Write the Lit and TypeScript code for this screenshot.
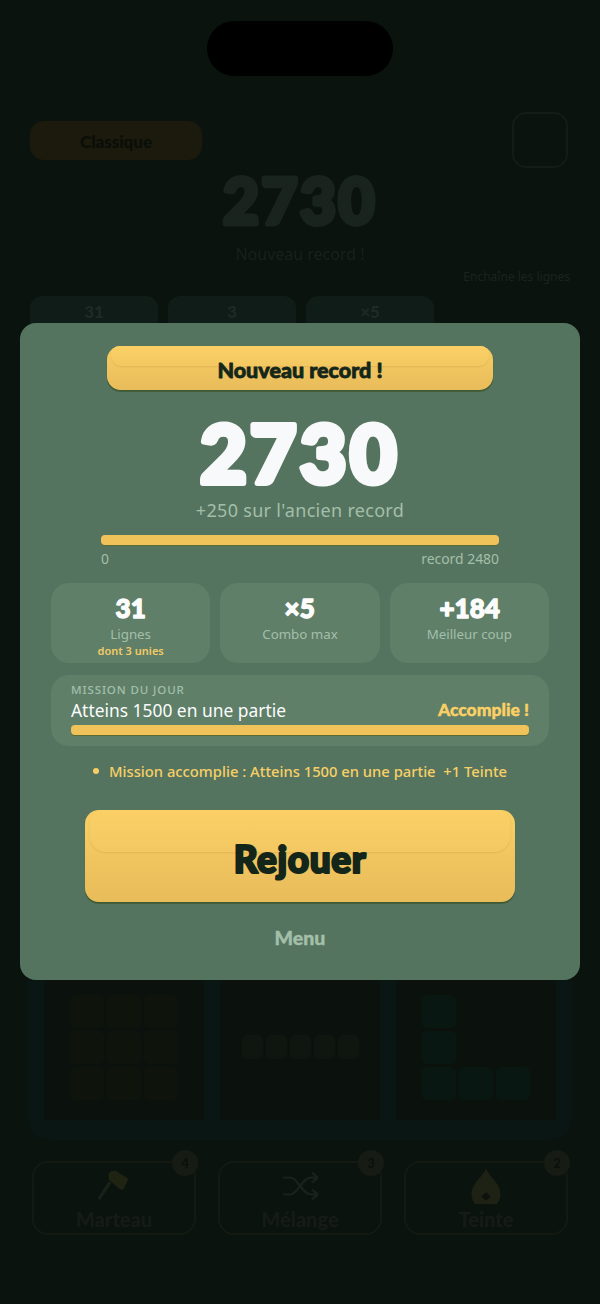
import { LitElement, html, css, svg } from "lit";
import { customElement } from "lit/decorators.js";

const stats = [
  { value: "31", label: "Lignes", note: "dont 3 unies" },
  { value: "×5", label: "Combo max", note: "" },
  { value: "+184", label: "Meilleur coup", note: "" },
];

// cells of the three tray pieces, 1 = filled
const pieces = [
  { cls: "warm", cols: 3, cells: [1, 1, 1, 1, 1, 1, 1, 1, 1] },
  { cls: "dull", cols: 5, cells: [1, 1, 1, 1, 1] },
  { cls: "teal", cols: 3, cells: [1, 0, 0, 1, 0, 0, 1, 1, 1] },
];

const hammer = svg`<path d="M3 27l-1.500-2 9-14 2.500 1.500z" fill="#1c2118"/><path d="M12 3l4-1 11 7-4 9-3 0-9-8c-1-2-1-5 1-7z" fill="#1f2312"/>`;
const shuffle = svg`<path d="M1 8h6c6 0 10 14 17 14h5M1 22h6c6 0 10-14 17-14h5M25 4l5 4-5 4M25 18l5 4-5 4" fill="none" stroke="#1a211a" stroke-width="2"/>`;
const drop = svg`<path d="M15 0c2 7 12 12 12 22a12 12 0 0 1-24 0C3 12 13 7 15 0z" fill="#1e2214"/><path d="M15 20l4 4-4 3-4-3z" fill="#0c130d"/>`;

const powers = [
  { icon: hammer, label: "Marteau", count: "4" },
  { icon: shuffle, label: "Mélange", count: "3" },
  { icon: drop, label: "Teinte", count: "2" },
];

// chunky rounded lettering: svg text so the stroke can have round joins
const chunky = (text: string, cls: string) =>
  html`<svg class="chunky ${cls}"><text x="50%" y="50%" text-anchor="middle" dominant-baseline="central">${text}</text></svg>`;

@customElement("app-root")
export class AppRoot extends LitElement {
  static styles = css`
    :host {
      display: block;
      position: relative;
      width: 600px;
      height: 1304px;
      overflow: hidden;
      background: #0a130e;
      font-family: "Noto Sans", sans-serif;
    }
    .island {
      position: absolute;
      top: 21px;
      left: 207px;
      width: 186px;
      height: 55px;
      border-radius: 28px;
      background: #000;
    }
    .chunky {
      display: block;
      overflow: visible;
    }
    .chunky text {
      fill: currentColor;
      stroke: currentColor;
      stroke-linejoin: round;
      paint-order: stroke fill;
      font-family: Lato, sans-serif;
      font-weight: 900;
    }

    /* game behind the dialog */
    .game {
      display: flex;
      flex-direction: column;
      padding: 112px 28px 0;
    }
    .topbar {
      display: flex;
      justify-content: space-between;
      align-items: center;
      height: 56px;
      padding: 0 4px 0 2px;
    }
    .mode {
      width: 172px;
      height: 39px;
      border-radius: 14px;
      background: #1b1a0c;
      color: #0a0e09;
      font: 900 17px/42px Lato, sans-serif;
      text-align: center;
    }
    .square {
      box-sizing: border-box;
      width: 56px;
      height: 56px;
      border: 2px solid #151c16;
      border-radius: 14px;
    }
    .ghost-score {
      width: 544px;
      height: 64px;
      color: #1a241f;
    }
    .ghost-score text {
      font-size: 62px;
      letter-spacing: 2.5px;
      stroke-width: 5px;
    }
    .ghost-sub {
      margin-top: 12px;
      color: #17211b;
      font-size: 16px;
      line-height: 20px;
      text-align: center;
    }
    .ghost-hint {
      height: 18px;
      margin-top: 4px;
      padding-right: 2px;
      color: #1a241e;
      font-size: 12px;
      line-height: 18px;
      text-align: right;
    }
    .ghost-stats {
      display: flex;
      gap: 10px;
      margin: 10px 0 0 2px;
    }
    .ghost-stats div {
      width: 128px;
      height: 44px;
      border-radius: 12px;
      background: #101c17;
      color: #1e2a24;
      font: 900 17px/32px Lato, sans-serif;
      text-align: center;
    }
    .board {
      box-sizing: border-box;
      height: 800px;
      padding: 0 16px 20px;
      display: flex;
      align-items: flex-end;
      gap: 16px;
      border-radius: 22px;
      background: #0a1613;
    }
    .slot {
      flex: 1;
      height: 146px;
      display: flex;
      align-items: center;
      justify-content: center;
      background: #0b120e;
    }
    .piece {
      display: grid;
      gap: 3px;
    }
    .piece i {
      display: block;
      width: 34px;
      height: 33px;
      border-radius: 5px;
    }
    .piece.dull i { width: 21px; height: 24px; background: #0f160f; }
    .piece.warm i.on { background: #0e130c; }
    .piece.teal i.on { background: #091713; }
    .powers {
      display: flex;
      gap: 22px;
      margin: 21px 4px 0;
    }
    .power {
      position: relative;
      box-sizing: border-box;
      flex: 1;
      height: 74px;
      padding-top: 5px;
      border: 2px solid #141a12;
      border-radius: 16px;
      color: #161b16;
      font: 900 20px/24px Lato, sans-serif;
      text-align: center;
    }
    .power svg {
      display: block;
      width: 36px;
      height: 36px;
      margin: 0 auto 3px;
    }
    .count {
      position: absolute;
      top: -13px;
      right: -4px;
      width: 26px;
      height: 26px;
      border-radius: 50%;
      background: #161c14;
      color: #0a100b;
      font: 900 13px/26px Lato, sans-serif;
    }

    /* dialog */
    .dialog {
      position: absolute;
      top: 323px;
      left: 20px;
      box-sizing: border-box;
      width: 560px;
      height: 657px;
      padding: 23px 31px 0;
      display: flex;
      flex-direction: column;
      align-items: center;
      border-radius: 16px;
      background: #55745f;
    }
    .gold {
      position: relative;
      box-sizing: border-box;
      display: flex;
      justify-content: center;
      color: #14261a;
      background: linear-gradient(#f9cf66, #e8bc5a);
      box-shadow: 0 1px 1px #3f5a30, 0 2px 0 #46603f;
    }
    .gold::before {
      content: "";
      position: absolute;
      background: linear-gradient(#fad066, #f3c862);
      box-shadow: 0 1px 2px rgba(190, 140, 50, 0.3);
    }
    .gold svg {
      position: relative;
    }
    .banner {
      width: 386px;
      height: 44px;
      border-radius: 14px;
    }
    .banner::before {
      top: 0;
      left: 4px;
      right: 4px;
      height: 20px;
      border-radius: 10px 10px 14px 14px;
    }
    .banner svg {
      width: 170px;
      height: 48px;
    }
    .banner text {
      font-size: 21.5px;
      stroke-width: 0.8px;
    }
    .score {
      width: 210px;
      height: 76px;
      margin: 24px 0 4px;
      color: #f8f9fa;
    }
    .score text {
      font-size: 80px;
      letter-spacing: 3.5px;
      stroke-width: 6px;
    }
    .gain {
      margin-top: 3px;
      color: #a3bfa9;
      font-size: 18px;
      line-height: 26px;
      letter-spacing: 0.3px;
    }
    .track {
      width: 100%;
      height: 10px;
      border-radius: 4px;
      background: #efc25a;
      box-shadow: 0 1px 0 #5a6b36;
    }
    .record-bar {
      box-sizing: border-box;
      width: 100%;
      margin-top: 12px;
      padding: 0 50px;
    }
    .ends {
      display: flex;
      justify-content: space-between;
      margin-top: 5px;
      color: #a3bfa9;
      font-size: 13.9px;
      line-height: 18px;
    }
    .stats {
      display: flex;
      gap: 10px;
      width: 100%;
      margin-top: 15px;
    }
    .stat {
      flex: 1;
      height: 80px;
      padding-top: 12px;
      box-sizing: border-box;
      border-radius: 18px;
      background: #5f7f69;
      text-align: center;
    }
    .stat .chunky {
      width: 100%;
      height: 26px;
      color: #fbfcfb;
    }
    .stat text {
      font-size: 26px;
      stroke-width: 1.4px;
    }
    .stat small {
      display: block;
      margin-top: 4px;
      color: #a3bfa9;
      font-size: 13.3px;
      line-height: 18px;
    }
    .stat em {
      display: block;
      margin-top: 1px;
      color: #f3cb66;
      font-size: 11px;
      font-style: normal;
      font-weight: 600;
      line-height: 14px;
    }
    .mission {
      box-sizing: border-box;
      width: 100%;
      height: 71px;
      margin-top: 12px;
      padding: 7px 20px 0;
      border-radius: 18px;
      background: #5f7f69;
    }
    .mission h3 {
      margin: 0;
      color: #a3bfa9;
      font-size: 11.5px;
      font-weight: 500;
      line-height: 15px;
      letter-spacing: 0.9px;
    }
    .mission-row {
      display: flex;
      justify-content: space-between;
      align-items: center;
      height: 26px;
      margin-bottom: 2px;
      color: #fbfcfb;
      font-size: 17.4px;
    }
    .mission-row b {
      color: #fbd165;
      font: 900 17.5px/26px Lato, sans-serif;
      -webkit-text-stroke: 0.4px #fbd165;
    }
    .done {
      display: flex;
      align-items: center;
      gap: 10px;
      height: 22px;
      margin-top: 14px;
      color: #f8cf66;
      font-size: 14.75px;
      font-weight: 500;
      white-space: pre;
    }
    .done i {
      width: 6px;
      height: 6px;
      border-radius: 50%;
      background: #f8cf66;
    }
    .replay {
      width: 430px;
      height: 92px;
      margin-top: 28px;
      border-radius: 14px;
    }
    .replay::before {
      top: 0;
      left: 5px;
      right: 5px;
      height: 42px;
      border-radius: 12px 12px 16px 16px;
    }
    .replay svg {
      width: 150px;
      height: 96px;
    }
    .replay text {
      font-size: 37px;
      letter-spacing: 0.6px;
      stroke-width: 2.2px;
    }
    .menu {
      margin-top: 24px;
      color: #a3bfa9;
      font: 900 19.5px/24px Lato, sans-serif;
      -webkit-text-stroke: 0.4px #a3bfa9;
    }
  `;

  render() {
    return html`
      <div class="game">
        <div class="topbar">
          <div class="mode">Classique</div>
          <div class="square"></div>
        </div>
        ${chunky("2730", "ghost-score")}
        <div class="ghost-sub">Nouveau record !</div>
        <div class="ghost-hint">Enchaîne les lignes</div>
        <div class="ghost-stats"><div>31</div><div>3</div><div>×5</div></div>
        <div class="board">
          ${pieces.map(
            (p) => html`<div class="slot">
              <div class="piece ${p.cls}" style="grid-template-columns: repeat(${p.cols}, auto)">
                ${p.cells.map((c) => html`<i class=${c ? "on" : ""}></i>`)}
              </div>
            </div>`
          )}
        </div>
        <div class="powers">
          ${powers.map(
            (p) => html`<div class="power">
              <svg viewBox="0 0 30 30">${p.icon}</svg>
              ${p.label}
              <div class="count">${p.count}</div>
            </div>`
          )}
        </div>
      </div>
      <div class="island"></div>

      <div class="dialog">
        <div class="gold banner">${chunky("Nouveau record !", "")}</div>
        ${chunky("2730", "score")}
        <div class="gain">+250 sur l'ancien record</div>
        <div class="record-bar">
          <div class="track"></div>
          <div class="ends"><span>0</span><span>record 2480</span></div>
        </div>
        <div class="stats">
          ${stats.map(
            (s) => html`<div class="stat">
              ${chunky(s.value, "")}
              <small>${s.label}</small>
              ${s.note ? html`<em>${s.note}</em>` : ""}
            </div>`
          )}
        </div>
        <div class="mission">
          <h3>MISSION DU JOUR</h3>
          <div class="mission-row"><span>Atteins 1500 en une partie</span><b>Accomplie !</b></div>
          <div class="track"></div>
        </div>
        <div class="done"><i></i><span>Mission accomplie : Atteins 1500 en une partie  +1 Teinte</span></div>
        <div class="gold replay">${chunky("Rejouer", "")}</div>
        <div class="menu">Menu</div>
      </div>
    `;
  }
}
